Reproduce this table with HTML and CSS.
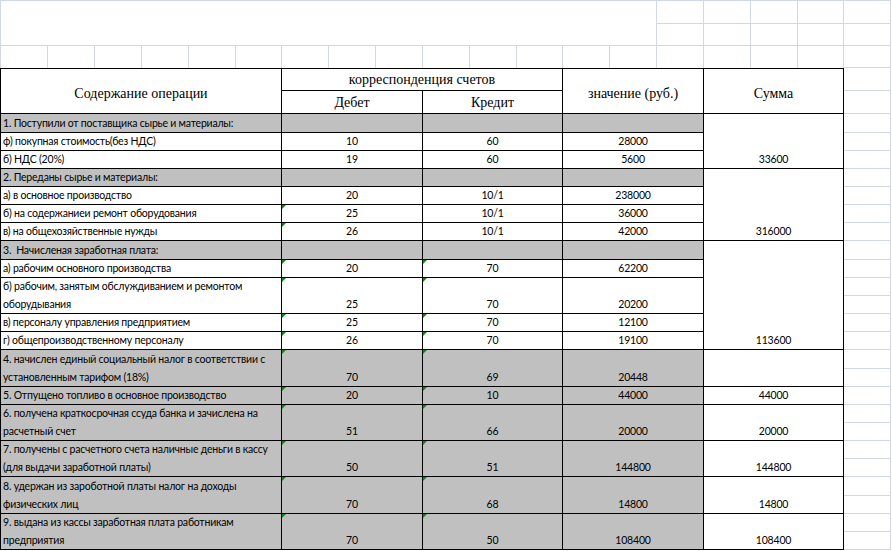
FILE: index.html
```html
<!DOCTYPE html>
<html lang="ru">
<head>
<meta charset="utf-8">
<title>Журнал хозяйственных операций</title>
<link rel="stylesheet" href="styles.css">
</head>
<body>
<div class="sheet">
  <div class="top">
    <div class="g merge"></div>
    <div class="g"></div><div class="g"></div><div class="g"></div><div class="g"></div><div class="g"></div>
    <div class="g"></div><div class="g"></div><div class="g"></div><div class="g"></div><div class="g"></div>
    <div class="g open"></div><div class="g open"></div><div class="g open"></div><div class="g open"></div><div class="g open"></div><div class="g open"></div>
    <div class="g open"></div><div class="g open"></div><div class="g open"></div><div class="g open"></div><div class="g open"></div><div class="g open"></div>
    <div class="g open"></div><div class="g open"></div><div class="g open"></div><div class="g open"></div><div class="g open"></div><div class="g open"></div>
    <div class="g"></div>
  </div>

  <div class="tbl">
    <!-- header row 1 -->
    <div class="c a h hd top-b r2">Содержание операции</div>
    <div class="c h top-b c2">корреспонденция счетов</div>
    <div class="c h hd top-b r2">значение (руб.)</div>
    <div class="c h hd top-b r2">Сумма</div>
    <div class="g"></div>
    <!-- header row 2 -->
    <div class="c h hs">Дебет</div>
    <div class="c h hs">Кредит</div>
    <div class="g"></div>

    <!-- 1 -->
    <div class="c a txt gray">1. Поступили от поставщика сырье и материалы:</div>
    <div class="c gray"></div><div class="c gray"></div><div class="c gray"></div>
    <div class="c num r3">33600</div>
    <div class="g"></div>

    <div class="c a txt">ф) покупная стоимость(без НДС)</div>
    <div class="c num">10</div><div class="c num">60</div><div class="c num">28000</div>
    <div class="g"></div>

    <div class="c a txt">б) НДС (20%)</div>
    <div class="c num">19</div><div class="c num">60</div><div class="c num">5600</div>
    <div class="g"></div>

    <!-- 2 -->
    <div class="c a txt gray">2. Переданы сырье и материалы:</div>
    <div class="c gray"></div><div class="c gray"></div><div class="c gray"></div>
    <div class="c num r4">316000</div>
    <div class="g"></div>

    <div class="c a txt">а) в основное производство</div>
    <div class="c num">20</div><div class="c num">10/1</div><div class="c num">238000</div>
    <div class="g"></div>

    <div class="c a txt">б) на содержаниеи ремонт оборудования</div>
    <div class="c num mark">25</div><div class="c num">10/1</div><div class="c num">36000</div>
    <div class="g"></div>

    <div class="c a txt">в) на общехозяйственные нужды</div>
    <div class="c num mark">26</div><div class="c num">10/1</div><div class="c num">42000</div>
    <div class="g"></div>

    <!-- 3 -->
    <div class="c a txt gray">3.&nbsp; Начисленая заработная плата:</div>
    <div class="c gray"></div><div class="c gray"></div><div class="c gray"></div>
    <div class="c num r6">113600</div>
    <div class="g"></div>

    <div class="c a txt">а) рабочим основного производства</div>
    <div class="c num mark">20</div><div class="c num mark">70</div><div class="c num">62200</div>
    <div class="g"></div>

    <div class="c a txt r2">б) рабочим, занятым обслуждиванием и ремонтом<br>оборудывания</div>
    <div class="c num mark r2">25</div><div class="c num mark r2">70</div><div class="c num r2">20200</div>
    <div class="g"></div>
    <div class="g"></div>

    <div class="c a txt">в) персоналу управления предприятием</div>
    <div class="c num mark">25</div><div class="c num mark">70</div><div class="c num">12100</div>
    <div class="g"></div>

    <div class="c a txt">г) общепроизводственному персоналу</div>
    <div class="c num mark">26</div><div class="c num mark">70</div><div class="c num">19100</div>
    <div class="g"></div>

    <!-- 4 -->
    <div class="c a txt gray r2">4. начислен единый социальный налог в соответствии с<br>установленным тарифом (18%)</div>
    <div class="c num gray mark r2">70</div><div class="c num gray mark r2">69</div><div class="c num gray r2">20448</div>
    <div class="c num r2"></div>
    <div class="g"></div>
    <div class="g"></div>

    <!-- 5 -->
    <div class="c a txt gray">5. Отпущено топливо в основное производство</div>
    <div class="c num gray mark">20</div><div class="c num gray mark">10</div><div class="c num gray">44000</div>
    <div class="c num">44000</div>
    <div class="g"></div>

    <!-- 6 -->
    <div class="c a txt gray r2">6. получена краткосрочная ссуда банка и зачислена на<br>расчетный счет</div>
    <div class="c num gray mark r2">51</div><div class="c num gray mark r2">66</div><div class="c num gray r2">20000</div>
    <div class="c num r2">20000</div>
    <div class="g"></div>
    <div class="g"></div>

    <!-- 7 -->
    <div class="c a txt gray r2">7. получены с расчетного счета наличные деньги в кассу<br>(для выдачи заработной платы)</div>
    <div class="c num gray mark r2">50</div><div class="c num gray mark r2">51</div><div class="c num gray r2">144800</div>
    <div class="c num r2">144800</div>
    <div class="g"></div>
    <div class="g"></div>

    <!-- 8 -->
    <div class="c a txt gray r2">8. удержан из зароботной платы налог на доходы<br>физических лиц</div>
    <div class="c num gray mark r2">70</div><div class="c num gray mark r2">68</div><div class="c num gray r2">14800</div>
    <div class="c num r2">14800</div>
    <div class="g"></div>
    <div class="g"></div>

    <!-- 9 -->
    <div class="c a txt gray r2">9. выдана из кассы заработная плата работникам<br>предприятия</div>
    <div class="c num gray mark r2">70</div><div class="c num gray mark r2">50</div><div class="c num gray r2">108400</div>
    <div class="c num r2">108400</div>
    <div class="g"></div>
    <div class="g"></div>
  </div>
</div>
</body>
</html>
```

FILE: styles.css
```css
* { box-sizing: border-box; }

html, body {
  margin: 0;
  padding: 0;
  background: #ffffff;
}

.sheet {
  width: 892px;
  height: 551px;
  overflow: hidden;
  background: #ffffff;
}

/* light spreadsheet gridlines above the table */
.top {
  display: grid;
  grid-template-columns: 47px 47px 47px 47px 47px 46px 47px 47px 47px 47px 47px 46px 47px 47px 47px 47px 47px 46px 47px;
  grid-template-rows: 23px 22px 22px;
  border-top: 1px solid #d0d7e5;
  border-left: 1px solid #d0d7e5;
  width: 891px;
}

.g {
  border-right: 1px solid #d0d7e5;
  border-bottom: 1px solid #d0d7e5;
}

.g.open {
  border-bottom: none;
}

.top .merge {
  grid-column: span 14;
  grid-row: span 2;
}

/* the table */
.tbl {
  display: grid;
  grid-template-columns: 282px 141px 140px 141px 140px 47px;
  grid-template-rows: 23px 23px 19px 18px 18px 18px 18px 18px 18px 19px 18px 18px 18px 18px 18px 19px 18px 18px 18px 18px 18px 18px 19px 18px 18px 18px;
  width: 891px;
}

.c {
  position: relative;
  border-right: 1px solid #000;
  border-bottom: 1px solid #000;
  display: flex;
  align-items: flex-end;
  font-family: Lato, "Liberation Sans", sans-serif;
  font-size: 10.5px;
  letter-spacing: -0.2px;
  line-height: 17px;
  color: #000;
  white-space: nowrap;
}

.c.a { border-left: 1px solid #000; }
.top-b { border-top: 1px solid #000; }

.r2 { grid-row: span 2; }
.r3 { grid-row: span 3; }
.r4 { grid-row: span 4; }
.r6 { grid-row: span 6; }
.c2 { grid-column: span 2; }

.h {
  font-family: "Liberation Serif", "Times New Roman", serif;
  font-size: 14px;
  letter-spacing: 0;
  line-height: 18px;
  justify-content: center;
  align-items: center;
}

.hd {
  padding-top: 5px;
}

.hs {
  align-items: flex-end;
  padding-bottom: 1px;
}

.txt {
  padding-left: 2px;
}

.txt.r2 {
  line-height: 18px;
}

.num {
  justify-content: center;
}

.gray {
  background: #c0c0c0;
}

/* Excel "number stored as text" indicator */
.mark::before {
  content: "";
  position: absolute;
  top: 0;
  left: 0;
  border-top: 4px solid #0b8a0b;
  border-right: 4px solid transparent;
}
```
